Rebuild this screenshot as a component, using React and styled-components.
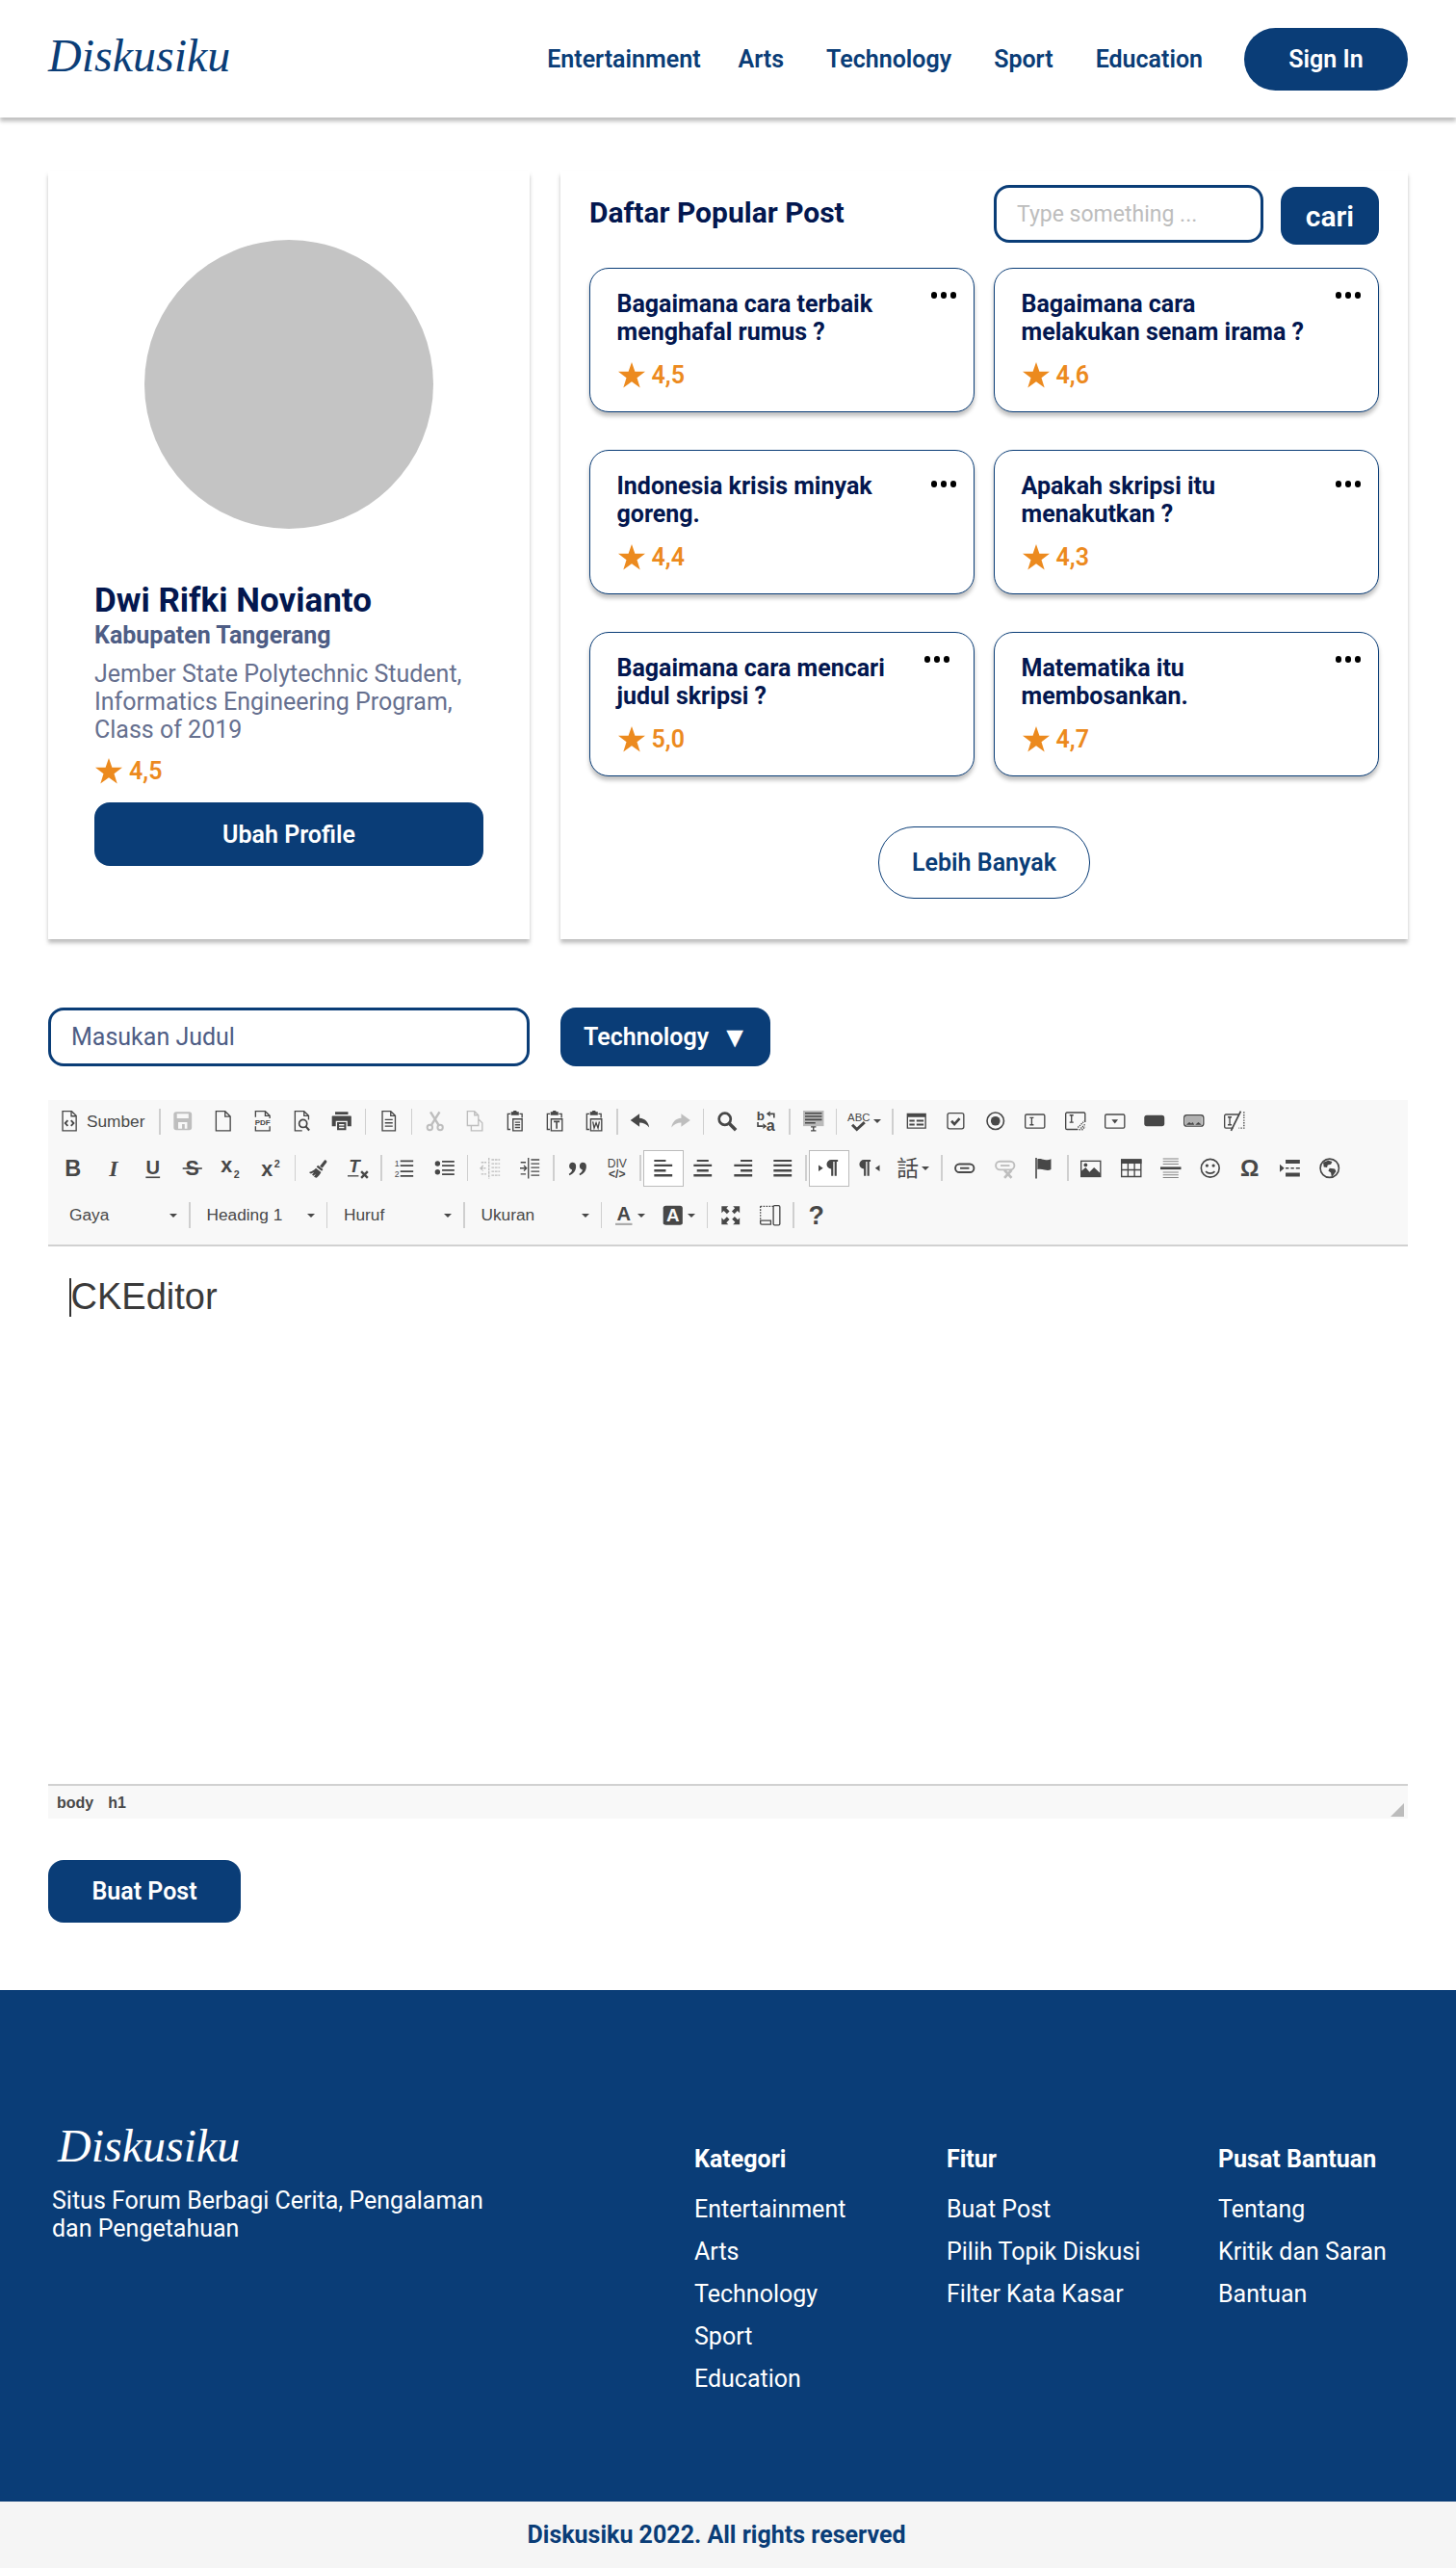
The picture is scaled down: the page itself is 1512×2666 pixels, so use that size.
import React from "react";
import styled, { createGlobalStyle } from "styled-components";

const NAVY = "#0a3d77";
const INK = "#03174f";
const ORANGE = "#ec8a1e";

const GlobalStyle = createGlobalStyle`
  * { box-sizing: border-box; }
  body {
    margin: 0;
    background: #fff;
    font-family: Roboto, "Liberation Sans", sans-serif;
  }
`;

const posts = [
  { title: ["Bagaimana cara terbaik", "menghafal rumus ?"], rate: "4,5" },
  { title: ["Bagaimana cara", "melakukan senam irama ?"], rate: "4,6" },
  { title: ["Indonesia krisis minyak", "goreng."], rate: "4,4", drop: true },
  { title: ["Apakah skripsi itu", "menakutkan ?"], rate: "4,3", drop: true },
  { title: ["Bagaimana cara mencari", "judul skripsi ?"], rate: "5,0", shift: true },
  { title: ["Matematika itu", "membosankan."], rate: "4,7" },
];

const footerCols = [
  { head: "Kategori", width: 262, items: ["Entertainment", "Arts", "Technology", "Sport", "Education"] },
  { head: "Fitur", width: 282, items: ["Buat Post", "Pilih Topik Diskusi", "Filter Kata Kasar"] },
  { head: "Pusat Bantuan", width: 190, items: ["Tentang", "Kritik dan Saran", "Bantuan"] },
];

// solid shapes inside the stroked icon svg
const F = { fill: "currentColor", stroke: "none" };
const T = { fill: "currentColor", stroke: "none", fontFamily: "'Liberation Sans', sans-serif" };

const clip = (
  <>
    <path d="M4.5 2.5H2.5v12h2M11.5 2.5h2v3" />
    <path {...F} d="M5 1h1.5l.5-1h2l.5 1H11v2.5H5z" />
  </>
);

const icons = {
  source: (
    <>
      <path d="M3 .5h7l3.5 3.5v11.5H3z" />
      <path d="M9.7.7v3.6h3.6" />
      <path strokeWidth="1.4" d="M7 7.5L5 9.7l2 2.2M9.5 7.5l2 2.2-2 2.2" />
    </>
  ),
  save: <path {...F} d="M1 3a2 2 0 012-2h10a2 2 0 012 2v10a2 2 0 01-2 2H3a2 2 0 01-2-2zm2.5-.5V6h9V2.500zM4.500 9v5h7V9zm3 1.500h2V14h-2z" fillRule="evenodd" />,
  newpage: <path d="M2.5.5h7l4 4v11h-11zM9.5.5v4h4" />,
  pdf: (
    <>
      <path d="M2.5 5V.5H10L13.5 4v2M2.5 12v3.5h11V12M10 .5V4h3.5" />
      <text {...T} x="8" y="11" fontSize="6" fontWeight="700" textAnchor="middle">PDF</text>
    </>
  ),
  preview: (
    <>
      <path d="M8 15.5H2.5V.5h7L13 4v3M9.5.5V4H13" />
      <circle cx="8.7" cy="10" r="3" strokeWidth="1.3" />
      <path strokeWidth="1.6" d="M10.8 12.2l2.7 3" />
    </>
  ),
  print: <path {...F} fillRule="evenodd" d="M3 1h10v2H3zM1 4h14a.5.5 0 01.5.5V12h-3V8h-9v4h-3V4.5A.5.5 0 011 4zM4.5 9h7v6h-7zM6 10.5v1h4v-1zM6 12.5v1h4v-1z" />,
  templates: (
    <>
      <path d="M3 .5h6.5L13 4v11.5H3zM9.5.5V4H13" />
      <path d="M5 7h6M5 9.5h6M5 12h6" />
    </>
  ),
  cut: (
    <>
      <circle cx="4" cy="13" r="2" strokeWidth="1.5" />
      <circle cx="12" cy="13" r="2" strokeWidth="1.5" />
      <path strokeWidth="1.8" d="M5 11.5L11.5 1M11 11.5L4.5 1" />
    </>
  ),
  copy: <path d="M2.5.5H8l3 3v8H2.5zM8 .5v3h3M5.5 11.5v4H14v-6l-3-3" />,
  paste: (
    <>
      {clip}
      <path d="M6.5 6.5h7v9h-7zM8 9h4M8 11h4M8 13h4" />
    </>
  ),
  pasteT: (
    <>
      {clip}
      <path d="M5.5 6.5H14v9H5.5z" />
      <path strokeWidth="1.2" d="M7.5 8.5H12M9.75 8.5V14" />
    </>
  ),
  pasteW: (
    <>
      {clip}
      <path d="M5.5 6.5H14v9H5.5z" />
      <path d="M7.2 8.5l1 5 1.5-4 1.5 4 1-5" />
    </>
  ),
  undo: <path {...F} d="M7.5 2.5L.5 7.5l7 5V9.3c3 0 5.5 1 7.5 3.7-.5-4-3-7-7.500-7.300z" />,
  redo: <path {...F} d="M8.5 2.5l7 5-7 5V9.3c-3 0-5.5 1-7.5 3.700.5-4 3-7 7.500-7.300z" />,
  find: (
    <>
      <circle cx="6.5" cy="6.5" r="4.5" strokeWidth="2" />
      <path strokeWidth="2.6" d="M10 10l5 5" />
    </>
  ),
  replace: (
    <>
      <text {...T} x=".5" y="7.5" fontSize="10" fontWeight="700">b</text>
      <text {...T} x="8" y="15.5" fontSize="12" fontWeight="700">a</text>
      <path strokeWidth="1.2" d="M14 5.5v-3h-3M1.5 9v3h4" />
      <path {...F} d="M8 2.5l3-2.2v4.4zM8.500 12l-3-2.200v4.400z" />
    </>
  ),
  selectall: (
    <>
      <path {...F} opacity=".35" d="M0 0h16v12H0z" />
      <path strokeWidth="1.2" d="M1.5 2h13M1.5 4.5h13M1.5 7h13M1.5 9.5h8" />
      <path d="M6 12.5h4M6 15.5h4M8 12.5v3" />
    </>
  ),
  spell: (
    <>
      <text {...T} x="8" y="8" fontSize="8.5" textAnchor="middle">ABC</text>
      <path strokeWidth="2.2" d="M3 11l3.5 3.5 6-5.500" />
    </>
  ),
  form: <path {...F} fillRule="evenodd" d="M.5 2h15v12H.5zM1.5 5v8h13V5zM2.5 7h4v1.5h-4zM8 7h5.5v1.5H8zM2.5 10h4v1.5h-4zM8 10h5.5v1.5H8z" />,
  checkbox: (
    <>
      <rect x="1.5" y="2" width="12.5" height="12" rx="1.5" />
      <path strokeWidth="2" d="M4.5 8l2.3 2.5 4-4.5" />
    </>
  ),
  radio: (
    <>
      <circle cx="8" cy="8" r="6.5" strokeWidth="1.2" />
      <circle {...F} cx="8" cy="8" r="3.6" />
    </>
  ),
  textfield: (
    <>
      <rect x=".5" y="3" width="15" height="10.5" rx="1" />
      <path d="M4 5.5h3M4 11h3M5.500 5.500V11" />
    </>
  ),
  textarea: (
    <>
      <path d="M10 14.5H1.5a1 1 0 01-1-1v-11a1 1 0 011-1h13a1 1 0 011 1V9" />
      <path d="M3.5 3.5h3M3.5 9h3M5 3.5V9" />
      <path strokeDasharray="1 .7" d="M11 15l4.5-4.5M13 15l2.5-2.5M10 13l5-5" />
    </>
  ),
  select: (
    <>
      <rect x=".5" y="3" width="15" height="10.5" rx="1" />
      <path {...F} d="M5.5 6.8h5L8 10z" />
    </>
  ),
  button: <rect {...F} x=".2" y="3.5" width="15.6" height="8.5" rx="2" />,
  imagebutton: (
    <>
      <rect x=".5" y="3.5" width="15" height="8.5" rx="2" />
      <path {...F} opacity=".4" d="M1.5 4.5h13V11h-13z" />
      <path {...F} d="M2 11l2.5-2L6 10l1-1 1.5 2zM9 11l2.5-2L14 11z" />
    </>
  ),
  hidden: (
    <>
      <path d="M7 13.5H1.5a1 1 0 01-1-1V4a1 1 0 011-1h10" />
      <path strokeDasharray="1 1" d="M15.5 1v12.5h-4" />
      <path d="M3 5h3M3 11h3M4.5 5v6" />
      <path strokeWidth="1.3" d="M5.5 15.5L13 .5" />
    </>
  ),
  bold: <text {...T} x="8" y="14.4" fontSize="17.5" fontWeight="700" textAnchor="middle">B</text>,
  italic: <text {...T} x="8" y="14.4" fontSize="17.5" fontWeight="700" fontStyle="italic" fontFamily="'Liberation Serif', serif" textAnchor="middle">I</text>,
  underline: (
    <>
      <text {...T} x="8" y="12.5" fontSize="15" fontWeight="700" textAnchor="middle">U</text>
      <path {...F} d="M2.5 14.5h11v1.2h-11z" />
    </>
  ),
  strike: (
    <>
      <text {...T} x="8" y="13.5" fontSize="16" fontWeight="700" textAnchor="middle">S</text>
      <path {...F} d="M.5 7.6h15v1.2H.5z" />
    </>
  ),
  subscript: (
    <>
      <text {...T} x="-.5" y="11" fontSize="16" fontWeight="700">x</text>
      <text {...T} x="9.5" y="15.5" fontSize="8" fontWeight="700">2</text>
    </>
  ),
  superscript: (
    <>
      <text {...T} x="-.5" y="14" fontSize="16" fontWeight="700">x</text>
      <text {...T} x="9.5" y="7.5" fontSize="8" fontWeight="700">2</text>
    </>
  ),
  brush: (
    <>
      <path {...F} d="M9 6.5l3.5-4.5c.6-.9 2.5.6 1.8 1.5L11 7.8z" />
      <path {...F} d="M7.5 5.8l4 3.2-1 1.3-4-3.2zM6 8l4 3.200c-1 2-2 3-3.500 4.300-1-.2-1.500-.5-2-1l1.500-2-2 1.500-1-1 1.500-1.800-2.300 1C1 12 1 11.500 1 11c2-.5 3.500-1.500 5-3z" />
    </>
  ),
  removeformat: (
    <>
      <text {...T} x="1" y="11.5" fontSize="14" fontWeight="700" fontStyle="italic">T</text>
      <path {...F} d="M0 13.5h8.5v1H0z" />
      <path strokeWidth="1.8" d="M10.5 10.5l5 5M15.5 10.5l-5 5" />
    </>
  ),
  ol: (
    <>
      <text {...T} x=".5" y="7" fontSize="6.5">1</text>
      <text {...T} x=".5" y="15" fontSize="6.5">2</text>
      <path strokeWidth="1.3" d="M5 2.5h10M5 6h10M5 10.5h10M5 14h10" />
    </>
  ),
  ul: (
    <>
      <circle {...F} cx="2.5" cy="4.5" r="2" />
      <circle {...F} cx="2.5" cy="11" r="2" />
      <path strokeWidth="1.3" d="M6 2.8h9.5M6 6h9.5M6 9.5h9.5M6 12.7h9.5" />
    </>
  ),
  outdent: <path d="M6.5 0v16M8.5 1.5H15M8.5 4.5H15M8.5 7.5H15M8.5 10.5H15M8.5 13.5H15M0 8h4M2 6L0 8l2 2M.5 3.5h4M.5 12.5h4" strokeDasharray="2 .6" />,
  indent: <path d="M6.5 0v16M8.5 1.5H15M8.5 4.5H15M8.5 7.5H15M8.5 10.5H15M8.5 13.5H15M0 8h4.5M3 6l2 2-2 2M.5 3.5h4M.5 12.5h4" />,
  quote: <path {...F} d="M3.8 3.5a3 3 0 013 3c0 3.5-2 6-5 7l-.5-1c1.6-.9 2.3-2 2.5-3.2a3 3 0 010-5.800zM11.800 3.500a3 3 0 013 3c0 3.500-2 6-5 7l-.5-1c1.600-.9 2.300-2 2.500-3.200a3 3 0 010-5.800z" />,
  div: (
    <>
      <text {...T} x="8" y="7.5" fontSize="9" textAnchor="middle">DIV</text>
      <text {...T} x="8" y="15.5" fontSize="9" fontWeight="700" textAnchor="middle">&lt;/&gt;</text>
    </>
  ),
  left: <path {...F} d="M1 1.5h9V3H1zM1 5h14v1.7H1zM1 9h9v1.7H1zM1 12.7h14v1.8H1z" />,
  center: <path {...F} d="M3.5 1.5h9V3h-9zM1 5h14v1.7H1zM3.5 9h9v1.7h-9zM1 12.7h14v1.8H1z" />,
  right: <path {...F} d="M6 1.5h9V3H6zM1 5h14v1.7H1zM6 9h9v1.7H6zM1 12.7h14v1.8H1z" />,
  justify: <path {...F} d="M1 1.5h14V3H1zM1 5h14v1.7H1zM1 9h14v1.7H1zM1 12.7h14v1.8H1z" />,
  ltr: <path {...F} d="M0 5.500L3.500 8 0 10.500zM9.500 1.500H15V3h-1v11h-1.600V3h-1v11H9.800V8.500a3.500 3.500 0 010-7z" />,
  rtl: <path {...F} d="M16 5.500L12.500 8l3.500 2.500zM3.500 1.500H9V3H8v11H6.400V3h-1v11H3.800V8.500a3.500 3.500 0 010-7z" />,
  lang: <text {...T} x="8" y="14.5" fontSize="17" fontFamily="'Noto Sans CJK TC', sans-serif" textAnchor="middle">話</text>,
  link: (
    <>
      <rect x=".8" y="4.8" width="14.4" height="6.4" rx="3.2" strokeWidth="1.4" />
      <path strokeWidth="1.4" d="M4.5 8h7" />
    </>
  ),
  unlink: (
    <>
      <rect x=".8" y="2.8" width="14.4" height="6.4" rx="3.2" strokeWidth="1.4" />
      <path strokeWidth="1.4" d="M4.5 6h7" />
      <path strokeWidth="2" d="M7.5 9.5l5.5 6M13 9.5l-5.5 6" />
    </>
  ),
  anchor: (
    <>
      <path strokeWidth="1.2" d="M1.5 0v16" />
      <path {...F} d="M2.5 1c2-.8 3.5 0 5.5.5 2 .3 3.5.2 5-.5v8c-1.500.8-3 .8-5 .3-2-.5-3.500-1-5.500-.3z" />
    </>
  ),
  image: (
    <>
      <rect x=".5" y="2.5" width="15" height="12" />
      <circle {...F} cx="4" cy="5.5" r="1.4" />
      <path {...F} d="M.5 14.5v-4L4 7.5l3 3.5 3.5-3.5 5 4.5v2.5z" />
    </>
  ),
  table: (
    <>
      <path {...F} d="M0 1h16v3.5H0z" />
      <path d="M.5 1.5h15v13H.5zM5.5 4v10.5M10.5 4v10.5M.5 9.3h15" />
    </>
  ),
  hr: (
    <>
      <path opacity=".65" strokeWidth=".8" d="M2 .8h12M2 2.8h12M2 4.8h12M2 11.2h12M2 13.2h12M2 15.2h12" />
      <path strokeWidth="2" d="M0 8h16" />
    </>
  ),
  smiley: (
    <>
      <circle cx="8" cy="8" r="7" strokeWidth="1.2" />
      <circle {...F} cx="5.5" cy="6" r="1.2" />
      <circle {...F} cx="10.5" cy="6" r="1.2" />
      <path strokeWidth="1.2" d="M4.5 10.5c1.8 2 5.2 2 7 0" />
    </>
  ),
  omega: <text {...T} x="8" y="14.5" fontSize="18" fontWeight="700" textAnchor="middle">Ω</text>,
  pagebreak: <path {...F} d="M0 5l3.5 3L0 11zM4.5 1.5h11v3h-11zM4.5 7.5H7v1H4.5zM8.5 7.5H11v1H8.5zM12.5 7.5h3v1h-3zM4.5 11.5h11v3h-11z" />,
  iframe: (
    <>
      <circle cx="8" cy="8" r="7.2" strokeWidth="1.2" />
      <path {...F} d="M3 3.5L7 2l3 1-1 2-2.5.5L6 7.5 3.5 7zM8 8l4 .5 1 2-2.5 3.5-1 .5-.5-3-2-1.5z" />
    </>
  ),
  textcolor: (
    <>
      <text {...T} x="8" y="12" fontSize="15" fontWeight="700" textAnchor="middle">A</text>
      <path stroke="#aaa" strokeWidth="1.6" d="M1.5 14.8h13" />
    </>
  ),
  bgcolor: (
    <>
      <rect {...F} x=".5" y=".5" width="15" height="15" rx="2" />
      <text x="8" y="13" fill="#f8f8f8" stroke="none" fontFamily="'Liberation Sans', sans-serif" fontSize="14" fontWeight="700" textAnchor="middle">A</text>
    </>
  ),
  maximize: <path {...F} d="M1 1h5.2L4.7 2.5l2.4 2.4-2 2-2.4-2.4L1 6.2zM15 1v5.2l-1.7-1.7-2.4 2.4-2-2 2.4-2.4L9.8 1zM1 15V9.8l1.7 1.7 2.4-2.4 2 2-2.4 2.4L6.2 15zM15 15H9.8l1.7-1.7-2.4-2.4 2-2 2.4 2.4L15 9.8z" />,
  blocks: (
    <>
      <path strokeDasharray="1.2 1" d="M.5 1h10M.5 1v10" />
      <path d="M.5 12h8v3h-7a1 1 0 01-1-1zM10.5 1.5a1 1 0 011-1h3a1 1 0 011 1v13a1 1 0 01-1 1h-3a1 1 0 01-1-1z" />
    </>
  ),
  help: <text {...T} x="8" y="15" fontSize="20" fontWeight="700" textAnchor="middle">?</text>,
};

// toolbar description: arrays are groups, split by a separator
// suffix ! = disabled, * = pressed, > = has a dropdown arrow
const row1 = [
  ["save!", "newpage", "pdf", "preview", "print"],
  ["templates"],
  ["cut!", "copy!", "paste", "pasteT", "pasteW"],
  ["undo", "redo!"],
  ["find", "replace"],
  ["selectall"],
  ["spell>"],
  ["form", "checkbox", "radio", "textfield", "textarea", "select", "button", "imagebutton", "hidden"],
];
const row2 = [
  ["bold", "italic", "underline", "strike", "subscript", "superscript"],
  ["brush", "removeformat"],
  ["ol", "ul"],
  ["outdent!", "indent"],
  ["quote", "div"],
  ["left*", "center", "right", "justify"],
  ["ltr*", "rtl", "lang>"],
  ["link", "unlink!", "anchor"],
  ["image", "table", "hr", "smiley", "omega", "pagebreak", "iframe"],
];
const row3 = [["textcolor>", "bgcolor>"], ["maximize", "blocks"], ["help"]];

function ToolIcon({ name }) {
  return (
    <IconSvg viewBox="0 0 16 16" fill="none" stroke="currentColor" strokeWidth="1">
      {icons[name]}
    </IconSvg>
  );
}

function ToolGroups({ groups, lead }) {
  return groups.map((group, i) => (
    <React.Fragment key={i}>
      {(i > 0 || lead) && <Sep />}
      {group.map((raw) => {
        const name = raw.replace(/[!*>]/, "");
        return (
          <Tool key={name} $off={raw.endsWith("!")} $on={raw.endsWith("*")} $menu={raw.endsWith(">")}>
            <ToolIcon name={name} />
            {raw.endsWith(">") && <Caret />}
          </Tool>
        );
      })}
    </React.Fragment>
  ));
}

function Star() {
  return (
    <svg width="28" height="27" viewBox="0 0 28 27">
      <path fill={ORANGE} d="M14 0l3.4 9.8H28l-8.500 6.400 3.200 10.300L14 20.300 5.300 26.500l3.200-10.300L0 9.800h10.600z" />
    </svg>
  );
}

function Rating({ value }) {
  return (
    <RatingRow>
      <Star />
      <span>{value}</span>
    </RatingRow>
  );
}

export default function App() {
  return (
    <>
      <GlobalStyle />
      <Navbar>
        <Logo>Diskusiku</Logo>
        <NavLinks>
          {["Entertainment", "Arts", "Technology", "Sport", "Education"].map((n) => (
            <NavLink key={n}>{n}</NavLink>
          ))}
          <SignIn>Sign In</SignIn>
        </NavLinks>
      </Navbar>

      <Main>
        <TopGrid>
          <ProfileCard>
            <Avatar />
            <Name>Dwi Rifki Novianto</Name>
            <City>Kabupaten Tangerang</City>
            <Bio>
              Jember State Polytechnic Student,
              <br />
              Informatics Engineering Program,
              <br />
              Class of 2019
            </Bio>
            <ProfileRating>
              <Rating value="4,5" />
            </ProfileRating>
            <WideButton>Ubah Profile</WideButton>
          </ProfileCard>

          <PopularCard>
            <PopularHead>
              <PopularTitle>Daftar Popular Post</PopularTitle>
              <SearchInput placeholder="Type something ..." />
              <SearchButton>cari</SearchButton>
            </PopularHead>
            <PostGrid>
              {posts.map((p) => (
                <PostCard key={p.title[0] + p.rate}>
                  <PostTitle>
                    {p.title[0]}
                    <br />
                    {p.title[1]}
                  </PostTitle>
                  <Rating value={p.rate} />
                  <Dots $shift={p.shift} $drop={p.drop}>
                    <i />
                    <i />
                    <i />
                  </Dots>
                </PostCard>
              ))}
            </PostGrid>
            <MoreWrap>
              <MoreButton>Lebih Banyak</MoreButton>
            </MoreWrap>
          </PopularCard>
        </TopGrid>

        <FormRow>
          <TitleInput placeholder="Masukan Judul" />
          <TopicButton>
            Technology <span>▼</span>
          </TopicButton>
        </FormRow>

        <Editor>
          <Toolbar>
            <ToolRow>
              <SourceTool>
                <ToolIcon name="source" />
                <ToolLabel>Sumber</ToolLabel>
              </SourceTool>
              <ToolGroups groups={row1} lead />
            </ToolRow>
            <ToolRow>
              <ToolGroups groups={row2} />
            </ToolRow>
            <ToolRow $combo>
              {["Gaya", "Heading 1", "Huruf", "Ukuran"].map((c) => (
                <React.Fragment key={c}>
                  <Combo>
                    <ToolLabel>{c}</ToolLabel>
                    <Caret />
                  </Combo>
                  <Sep />
                </React.Fragment>
              ))}
              <ToolGroups groups={row3} />
            </ToolRow>
          </Toolbar>
          <EditArea>
            <Cursor />
            CKEditor
          </EditArea>
          <StatusBar>
            <span>body</span>
            <span>h1</span>
            <Resize />
          </StatusBar>
        </Editor>

        <PostButton>Buat Post</PostButton>
      </Main>

      <Footer>
        <Brand>
          <FooterLogo>Diskusiku</FooterLogo>
          <Tagline>
            Situs Forum Berbagi Cerita, Pengalaman
            <br />
            dan Pengetahuan
          </Tagline>
        </Brand>
        {footerCols.map((c) => (
          <FooterCol key={c.head} $w={c.width}>
            <FooterHead>{c.head}</FooterHead>
            {c.items.map((it) => (
              <FooterItem key={it}>{it}</FooterItem>
            ))}
          </FooterCol>
        ))}
      </Footer>
      <Copyright>Diskusiku 2022. All rights reserved</Copyright>
    </>
  );
}

const Navbar = styled.header`
  height: 122px;
  padding: 0 50px;
  display: flex;
  align-items: center;
  justify-content: space-between;
  background: #fff;
  box-shadow: 0 4px 4px rgba(0, 0, 0, 0.25);
`;

const Logo = styled.div`
  margin-bottom: 6px;
  font-family: "Liberation Serif", serif;
  font-style: italic;
  font-size: 48px;
  line-height: 1;
  color: ${NAVY};
`;

const NavLinks = styled.nav`
  display: flex;
  align-items: center;
  gap: 44px;
`;

const NavLink = styled.a`
  font-size: 25px;
  font-weight: 600;
  color: ${NAVY};
  &:first-child {
    margin-right: -5px;
  }
`;

const SignIn = styled.button`
  width: 170px;
  height: 65px;
  margin-left: -1px;
  border: none;
  border-radius: 33px;
  background: ${NAVY};
  color: #fff;
  font: 600 25px Roboto, sans-serif;
`;

const Main = styled.main`
  padding: 56px 50px 70px;
`;

const TopGrid = styled.section`
  display: grid;
  grid-template-columns: 500px 880px;
  gap: 32px;
`;

const Panel = styled.div`
  height: 797px;
  background: #fff;
  box-shadow: 0 4px 4px rgba(0, 0, 0, 0.25);
`;

const ProfileCard = styled(Panel)`
  padding: 71px 48px 0;
`;

const Avatar = styled.div`
  width: 300px;
  height: 300px;
  margin: 0 auto 56px;
  border-radius: 50%;
  background: #c4c4c4;
`;

const Name = styled.div`
  font-size: 35px;
  font-weight: 700;
  line-height: 38px;
  color: ${INK};
`;

const City = styled.div`
  margin-top: 3px;
  font-size: 25px;
  font-weight: 700;
  line-height: 28px;
  color: #4e5d85;
`;

const Bio = styled.div`
  margin-top: 11px;
  font-size: 25px;
  line-height: 29px;
  color: #66708f;
`;

const ProfileRating = styled.div`
  margin-top: 14px;
`;

const RatingRow = styled.div`
  display: flex;
  align-items: center;
  gap: 7px;
  height: 28px;
  margin-left: 1px;
  font-size: 25px;
  font-weight: 600;
  color: ${ORANGE};
`;

const WideButton = styled.button`
  display: block;
  width: 404px;
  height: 66px;
  margin-top: 19px;
  border: none;
  border-radius: 16px;
  background: ${NAVY};
  color: #fff;
  font: 600 25px Roboto, sans-serif;
`;

const PopularCard = styled(Panel)`
  padding: 13px 30px 0;
`;

const PopularHead = styled.div`
  display: flex;
  align-items: center;
  height: 62px;
  margin-bottom: 25px;
`;

const PopularTitle = styled.h2`
  flex: 1;
  margin: 0 0 4px;
  font-size: 30px;
  font-weight: 700;
  color: ${INK};
`;

const SearchInput = styled.input`
  width: 280px;
  height: 60px;
  padding: 0 21px;
  border: 3px solid ${NAVY};
  border-radius: 16px;
  outline: none;
  font: 400 23px Roboto, sans-serif;
  &::placeholder {
    color: #bdbdbd;
    opacity: 1;
  }
`;

const SearchButton = styled.button`
  width: 102px;
  height: 60px;
  margin-left: 18px;
  position: relative;
  top: 2px;
  border: none;
  border-radius: 16px;
  background: ${NAVY};
  color: #fff;
  font: 600 30px Roboto, sans-serif;
`;

const PostGrid = styled.div`
  display: grid;
  grid-template-columns: 400px 400px;
  grid-auto-rows: 150px;
  column-gap: 20px;
  row-gap: 39px;
`;

const PostCard = styled.article`
  position: relative;
  padding: 22px 27.5px 0;
  border: 1.5px solid ${NAVY};
  border-radius: 20px;
  background: #fff;
  box-shadow: 0 4px 4px rgba(0, 0, 0, 0.25);
`;

const PostTitle = styled.h3`
  margin: 0 0 16px;
  font-size: 25px;
  font-weight: 700;
  line-height: 29px;
  color: ${INK};
`;

const Dots = styled.div`
  position: absolute;
  top: ${(p) => (p.$drop ? 31 : 24)}px;
  right: ${(p) => (p.$shift ? 25 : 18)}px;
  display: flex;
  gap: 3.5px;
  i {
    width: 6.5px;
    height: 6.5px;
    border-radius: 50%;
    background: #000;
  }
`;

const MoreWrap = styled.div`
  display: flex;
  justify-content: center;
  margin-top: 52px;
`;

const MoreButton = styled.button`
  width: 220px;
  height: 75px;
  border: 1.5px solid ${NAVY};
  border-radius: 37px;
  background: #fff;
  color: ${NAVY};
  font: 600 25px Roboto, sans-serif;
`;

const FormRow = styled.div`
  display: flex;
  gap: 32px;
  margin-top: 71px;
`;

const TitleInput = styled.input`
  width: 500px;
  height: 61px;
  padding: 0 21px;
  border: 3px solid ${NAVY};
  border-radius: 16px;
  outline: none;
  font: 400 25px Roboto, sans-serif;
  &::placeholder {
    color: #4e5d85;
    opacity: 1;
  }
`;

const TopicButton = styled.button`
  width: 218px;
  height: 61px;
  padding-left: 8px;
  border: none;
  border-radius: 16px;
  background: ${NAVY};
  color: #fff;
  font: 600 25px Roboto, sans-serif;
  span {
    margin-left: 6px;
    font-size: 30px;
    line-height: 1;
    vertical-align: -2px;
  }
`;

const Editor = styled.section`
  margin-top: 35px;
  font-family: "Liberation Sans", Arial, sans-serif;
  color: #474747;
`;

const Toolbar = styled.div`
  height: 152px;
  padding-left: 5.4px;
  background: #f8f8f8;
  border-bottom: 2px solid #d1d1d1;
`;

const ToolRow = styled.div`
  display: flex;
  align-items: center;
  height: 44px;
  margin-bottom: 4.8px;
  padding-left: ${(p) => (p.$combo ? "2.6px" : 0)};
`;

const Tool = styled.div`
  flex: none;
  display: flex;
  align-items: center;
  justify-content: ${(p) => (p.$menu ? "flex-start" : "center")};
  width: ${(p) => (p.$menu ? "51.5px" : "41.25px")};
  height: 38px;
  padding-left: ${(p) => (p.$menu ? "9px" : 0)};
  gap: 4px;
  opacity: ${(p) => (p.$off ? 0.32 : 1)};
  background: ${(p) => (p.$on ? "#fff" : "transparent")};
  border: ${(p) => (p.$on ? "1.5px solid #bcbcbc" : "none")};
`;

const SourceTool = styled.div`
  flex: none;
  display: flex;
  align-items: center;
  gap: 7px;
  width: 107px;
  padding-left: 6px;
`;

const IconSvg = styled.svg`
  flex: none;
  width: 21.5px;
  height: 21.5px;
  overflow: visible;
`;

const ToolLabel = styled.span`
  font-size: 17.3px;
  color: #484848;
  white-space: nowrap;
`;

const Caret = styled.i`
  flex: none;
  width: 0;
  height: 0;
  border-left: 4.5px solid transparent;
  border-right: 4.5px solid transparent;
  border-top: 4.5px solid #484848;
`;

const Sep = styled.span`
  flex: none;
  width: 1.5px;
  height: 27px;
  margin: 0 2.8px;
  background: #cfcfcf;
`;

const Combo = styled.div`
  flex: none;
  display: flex;
  align-items: center;
  justify-content: space-between;
  width: 135.4px;
  padding: 0 9px 0 14px;
`;

const EditArea = styled.div`
  height: 558px;
  padding: 29px 0 0 22px;
  font-size: 38px;
  line-height: 46px;
  color: #3a3a3a;
`;

const Cursor = styled.span`
  display: inline-block;
  width: 1.5px;
  height: 40px;
  vertical-align: -8px;
  background: #333;
`;

const StatusBar = styled.div`
  position: relative;
  display: flex;
  align-items: center;
  gap: 15px;
  height: 36px;
  padding: 2px 0 0 9px;
  border-top: 2px solid #d1d1d1;
  background: #f8f8f8;
  font-size: 16px;
  font-weight: 700;
  color: #484848;
`;

const Resize = styled.i`
  position: absolute;
  right: 4px;
  bottom: 2px;
  border-left: 14px solid transparent;
  border-bottom: 14px solid #bcbcbc;
`;

const PostButton = styled.button`
  display: block;
  width: 200px;
  height: 65px;
  margin-top: 43px;
  border: none;
  border-radius: 16px;
  background: ${NAVY};
  color: #fff;
  font: 600 25px Roboto, sans-serif;
`;

const Footer = styled.footer`
  display: flex;
  align-items: flex-start;
  height: 531px;
  padding: 129px 0 0 54px;
  background: ${NAVY};
  color: #fff;
`;

const Brand = styled.div`
  width: 667px;
`;

const FooterLogo = styled.div`
  padding: 3px 0 0 6px;
  font-family: "Liberation Serif", serif;
  font-style: italic;
  font-size: 48px;
  line-height: 60px;
`;

const Tagline = styled.div`
  margin-top: 12px;
  font-size: 25px;
  line-height: 29px;
`;

const FooterCol = styled.div`
  width: ${(p) => p.$w}px;
  padding-top: 33px;
`;

const FooterHead = styled.div`
  font-size: 25px;
  font-weight: 700;
  line-height: 28px;
  margin-bottom: 16px;
`;

const FooterItem = styled.div`
  font-size: 25px;
  line-height: 44px;
`;

const Copyright = styled.div`
  height: 69px;
  padding-right: 24px;
  display: flex;
  align-items: center;
  justify-content: center;
  background: #f5f5f5;
  font-size: 25px;
  font-weight: 700;
  color: ${NAVY};
`;
